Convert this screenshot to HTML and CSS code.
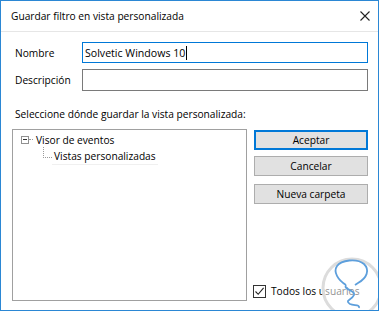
FILE: index.html
```html
<!DOCTYPE html>
<html lang="es">
<head>
<meta charset="utf-8">
<title>Guardar filtro en vista personalizada</title>
<link rel="stylesheet" href="styles.css">
</head>
<body>
<div class="window">
  <div class="titlebar">
    <span class="title">Guardar filtro en vista personalizada</span>
    <svg class="close" width="10" height="10" viewBox="0 0 10 10"><path d="M0.5 0.5 L9.5 9.5 M9.5 0.5 L0.5 9.5" stroke="#222" stroke-width="1.1" fill="none"/></svg>
  </div>
  <div class="content">
    <div class="field">
      <span class="label">Nombre</span>
      <div class="input focused"><span class="value">Solvetic Windows 10</span><span class="caret"></span></div>
    </div>
    <div class="field">
      <span class="label">Descripción</span>
      <div class="input"></div>
    </div>
    <div class="prompt">Seleccione dónde guardar la vista personalizada:</div>
    <div class="main">
      <div class="tree">
        <div class="node root">
          <span class="expander"><span class="minus"></span></span>
          <span class="hline"></span>
          <span class="node-text">Visor de eventos</span>
        </div>
        <div class="node child">
          <span class="elbow"></span>
          <span class="node-text selected">Vistas personalizadas</span>
        </div>
      </div>
      <div class="side">
        <div class="buttons">
          <button class="btn default">Aceptar</button>
          <button class="btn">Cancelar</button>
          <button class="btn third">Nueva carpeta</button>
        </div>
        <div class="check">
          <span class="box"><svg width="11" height="11" viewBox="0 0 11 11"><path d="M1.5 5.5 L4.2 8.3 L9.6 1.8" stroke="#222" stroke-width="1.1" fill="none"/></svg></span>
          <span class="check-label">Todos los usuarios</span>
        </div>
      </div>
    </div>
  </div>
  <svg class="watermark" width="70" height="62" viewBox="0 0 70 62">
    <circle cx="42" cy="38" r="29" fill="rgba(255,255,255,0.55)" stroke="#dcdcdc" stroke-width="3"/>
    <path d="M36 35 C 28 30, 23 22, 27 16 C 31 10, 47 8, 54 14 C 60 20, 57 28, 48 33 L 45 35" stroke="#5d9fdc" stroke-width="1.8" fill="none"/>
    <path d="M36 35 C 33 40, 46 40, 44 45 C 42 50, 34 50, 40 54 C 44 56, 50 54, 49 58" stroke="#5d9fdc" stroke-width="1.8" fill="none"/>
  </svg>
</div>
</body>
</html>
```
FILE: styles.css
```css
* { box-sizing: border-box; }
html, body { margin: 0; padding: 0; background: #ffffff; }
body {
  font-family: "Open Sans", "Noto Sans", "Liberation Sans", sans-serif;
  font-size: 10.2px;
  color: #000;
}
.window {
  position: relative;
  width: 379px;
  height: 311px;
  border: 1px solid #2b87d4;
  background: #fff;
  overflow: hidden;
  display: flex;
  flex-direction: column;
}
.titlebar {
  height: 31px;
  border-bottom: 1px solid #e6e6e6;
  display: flex;
  align-items: center;
  justify-content: space-between;
  padding: 0 8px 0 10px;
  flex: none;
}
.close { display: block; }
.content {
  padding: 10px 10px 0 11px;
  display: flex;
  flex-direction: column;
}
.field {
  display: flex;
  align-items: center;
  height: 21px;
  margin-bottom: 6px;
}
.field + .field { height: 22px; }
.label {
  width: 70px;
  padding-left: 3px;
  flex: none;
}
.input {
  flex: 1;
  height: 100%;
  border: 1px solid #7a7a7a;
  display: flex;
  align-items: center;
  padding-left: 2px;
  font-size: 10.6px;
}
.input.focused { border-color: #0078d7; }
.caret {
  display: inline-block;
  width: 1px;
  height: 14px;
  background: #000;
  margin-left: 1px;
}
.prompt {
  margin-top: 10px;
  line-height: 15px;
  padding-left: 3px;
}
.main {
  margin-top: 7px;
  display: flex;
  height: 172px;
}
.tree {
  width: 235px;
  flex: none;
  border: 1px solid #a0a0a0;
  padding: 1px 0 0 8px;
}
.node {
  display: flex;
  align-items: center;
  height: 17px;
}
.expander {
  width: 8px;
  height: 8px;
  border: 1px solid #919191;
  position: relative;
  flex: none;
}
.minus {
  position: absolute;
  left: 1px;
  top: 2px;
  width: 4px;
  height: 1px;
  background: #333;
}
.hline {
  width: 4px;
  border-top: 1px dotted #9a9a9a;
  margin-right: 1px;
  flex: none;
}
.child { padding-left: 22px; align-items: flex-start; }
.elbow {
  width: 9px;
  height: 11px;
  border-left: 1px dotted #9a9a9a;
  border-bottom: 1px dotted #9a9a9a;
  flex: none;
  margin-top: -1px;
}
.node-text { padding: 0 2px; line-height: 16px; }
.selected { border-bottom: 1px solid #f0f0f0; }
.side {
  flex: 1;
  margin-left: 7px;
  display: flex;
  flex-direction: column;
  justify-content: space-between;
}
.buttons {
  display: flex;
  flex-direction: column;
  margin-top: 1px;
}
.btn {
  font: inherit;
  height: 20px;
  border: 1px solid #adadad;
  background: #e1e1e1;
  color: #000;
  padding: 0;
  margin-bottom: 6px;
}
.btn.third { margin-top: 2px; }
.btn.default { border: 2px solid #0078d7; }
.check {
  display: flex;
  align-items: center;
  margin-bottom: 3px;
  margin-left: -1px;
}
.box {
  width: 13px;
  height: 13px;
  border: 1px solid #333;
  display: flex;
  align-items: center;
  justify-content: center;
  margin-right: 5px;
}
.box svg { display: block; }
.watermark {
  position: absolute;
  left: 309px;
  top: 249px;
}
```
